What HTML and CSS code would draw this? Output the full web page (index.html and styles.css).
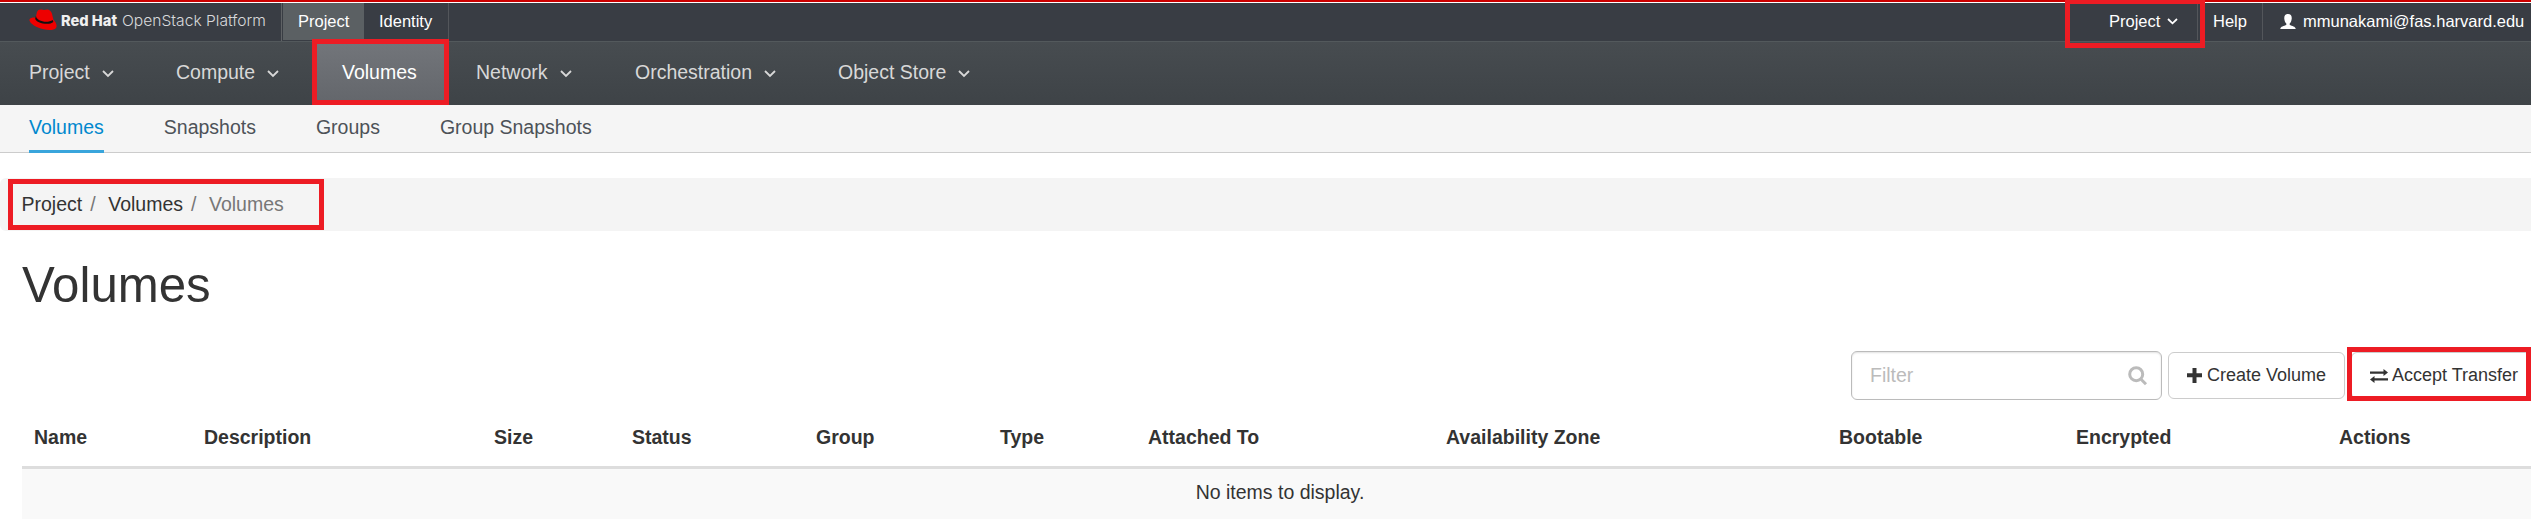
FILE: index.html
```html
<!DOCTYPE html>
<html lang="en">
<head>
<meta charset="utf-8">
<title>Volumes</title>
<link rel="stylesheet" href="styles.css">
</head>
<body>
<header class="topbar">
  <div class="brand">
    <svg width="240" height="30" viewBox="0 0 240 30">
      <path d="M7 13 L9 4 C10 1.500 12 1 15 1.800 C17 2.600 18 1 20 1.600 C23 2.500 24 5 24.500 8 L25.500 12 C28 14 29.500 18 28 20 C25 23.500 16 22 10 19.500 C4 17 .8 13.500 1.600 11.300 C2.300 9.500 5 9.300 8 9.500 Z" fill="#e00"/>
      <path d="M8 8 C8.300 13 19 15.800 24.800 12 L25.300 14 C21 18 7 14.800 7.200 10.500 Z" fill="#111"/>
      <text x="33" y="18" class="brand-bold" textLength="56" lengthAdjust="spacingAndGlyphs">Red Hat</text>
      <text x="94" y="18" class="brand-light" textLength="144" lengthAdjust="spacingAndGlyphs">OpenStack Platform</text>
    </svg>
  </div>
  <a class="tab tab-active">Project</a>
  <a class="tab tab-last">Identity</a>
  <div class="tools">
    <a class="tool tool-project">Project
      <svg width="11" height="7" viewBox="0 0 11 7"><path d="M1 1 L5.500 5.300 L10 1" class="chev"/></svg>
    </a>
    <a class="tool tool-help">Help</a>
    <a class="tool tool-user">
      <svg width="16" height="16" viewBox="0 0 16 16"><path d="M8 0 C10.800 0 12 2 11.700 4.700 C11.500 7 10.700 8.500 9.700 9.500 V11 C12 12 15.500 12.400 15.700 15 H.3 C.5 12.400 4 12 6.300 11 V9.500 C5.300 8.500 4.500 7 4.300 4.700 C4 2 5.200 0 8 0Z" fill="#fff"/></svg>
      mmunakami@fas.harvard.edu
    </a>
  </div>
  <div class="mark mark-project"></div>
</header>
<nav class="mainnav">
  <a>Project<svg width="12" height="8" viewBox="0 0 12 8"><path d="M1 1 L6 6 L11 1" class="chev"/></svg></a>
  <a>Compute<svg width="12" height="8" viewBox="0 0 12 8"><path d="M1 1 L6 6 L11 1" class="chev"/></svg></a>
  <a class="current">Volumes</a>
  <a>Network<svg width="12" height="8" viewBox="0 0 12 8"><path d="M1 1 L6 6 L11 1" class="chev"/></svg></a>
  <a>Orchestration<svg width="12" height="8" viewBox="0 0 12 8"><path d="M1 1 L6 6 L11 1" class="chev"/></svg></a>
  <a>Object Store<svg width="12" height="8" viewBox="0 0 12 8"><path d="M1 1 L6 6 L11 1" class="chev"/></svg></a>
</nav>
<nav class="subnav">
  <a class="selected">Volumes</a>
  <a>Snapshots</a>
  <a>Groups</a>
  <a>Group Snapshots</a>
</nav>
<div class="crumbs">
  <div class="crumb-box"><span>Project</span><i>/</i><span>Volumes</span><i>/</i><em>Volumes</em></div>
</div>
<main>
  <h1>Volumes</h1>
  <div class="actions">
    <div class="filter"><span>Filter</span>
      <svg width="20" height="20" viewBox="0 0 20 20"><circle cx="8.200" cy="8.200" r="6.500"/><path d="M12.800 13 L18 18.200"/></svg>
    </div>
    <a class="btn btn-create"><svg width="15" height="15" viewBox="0 0 15 15"><path d="M5.500 0 H9.500 V5.300 H15 V9.300 H9.500 V15 H5.500 V9.300 H0 V5.300 H5.500Z"/></svg>Create Volume</a>
    <div class="accept-wrap">
      <a class="btn btn-accept"><svg width="18" height="14" viewBox="0 0 18 14"><path d="M0 2.500 H13.500 V0 L18 3.600 L13.500 7 V4.700 H0Z M18 9.300 H4.500 V7 L0 10.400 L4.500 14 V11.500 H18Z"/></svg>Accept Transfer</a>
      <div class="mark mark-accept"></div>
    </div>
  </div>
  <table>
    <colgroup><col class="c1"><col class="c2"><col class="c3"><col class="c4"><col class="c5"><col class="c6"><col class="c7"><col class="c8"><col class="c9"><col class="c10"><col class="c11"></colgroup>
    <thead><tr><th>Name</th><th>Description</th><th>Size</th><th>Status</th><th>Group</th><th>Type</th><th>Attached To</th><th>Availability Zone</th><th>Bootable</th><th>Encrypted</th><th>Actions</th></tr></thead>
    <tbody><tr><td colspan="11">No items to display.</td></tr></tbody>
  </table>
</main>
</body>
</html>
```

FILE: styles.css
```css
* { box-sizing: border-box; }
body {
  margin: 0;
  height: 532px;
  overflow: hidden;
  background: #fff;
  color: #333;
  font: 19.5px "Liberation Sans", Arial, sans-serif;
}
svg { display: block; flex: none; }
.chev { fill: none; stroke: currentColor; stroke-width: 1.8; }

.topbar {
  position: relative;
  display: flex;
  height: 42px;
  border-top: 2px solid #c00;
  border-bottom: 1px solid #53595c;
  background: linear-gradient(#fff 1px, #393d44 1px);
  color: #fff;
  font-size: 16.5px;
  line-height: 37px;
}
.brand { width: 282px; height: 38px; margin: 1px 1px 0 0; padding: 5px 0 0 28px; border-right: 1px solid #5f6265; }
.brand-bold { font: 800 15px Inter, sans-serif; fill: #f0f0f0; }
.brand-light { font: 300 15px Inter, sans-serif; fill: #d8d9db; }
.tab { height: 37px; margin-top: 1px; padding-left: 15px; }
.tab-active { width: 81px; background: #5b6063; }
.tab-last { width: 85px; border-right: 1px solid #53565b; }
.tools { display: flex; margin-left: auto; margin-top: 1px; height: 37px; }
.tool { display: flex; align-items: center; white-space: nowrap; }
.tool-project { width: 89px; gap: 7px; border-right: 1px solid #53565b; }
.tool-help { width: 65px; padding-left: 15px; border-right: 1px solid #53565b; }
.tool-user { width: 268px; padding-left: 17px; gap: 7px; }
.mark { position: absolute; border: 5px solid #ed1c24; }
.mark-project { left: 2065px; top: -3px; width: 140px; height: 49px; z-index: 1; }

.mainnav {
  display: grid;
  grid-template-columns: 147px 140px 160px 159px 203px 300px;
  padding-left: 29px;
  height: 63px;
  background: linear-gradient(#474c50, #3e4347);
  color: #d8d8d8;
}
.mainnav a { display: flex; align-items: center; gap: 12px; padding-bottom: 2px; }
.mainnav svg { margin-top: 3px; }
.mainnav .current {
  width: 137px;
  height: 66px;
  margin: -3px 0 0 -4px;
  padding: 1px 0 0 25px;
  border: 5px solid #ed1c24;
  background: linear-gradient(#72757a, #64676c);
  color: #fff;
  z-index: 1;
}

.subnav {
  display: flex;
  height: 48px;
  padding-left: 29px;
  gap: 60px;
  border-bottom: 1px solid #ccc;
  background: #f5f5f5;
  color: #4d5258;
  line-height: 44px;
}
.subnav a { height: 48px; }
.subnav .selected { border-bottom: 3px solid #39a5dc; color: #0088ce; }

.crumbs { height: 53px; margin-top: 25px; padding: 1px 0 0 8px; border-radius: 6px 0 0 6px; background: #f4f4f4; }
.crumb-box { display: flex; width: 316px; height: 51px; border: 5px solid #ed1c24; padding-left: 8.500px; line-height: 41px; }
.crumb-box i { width: 26px; padding-left: 8px; font-style: normal; color: #777; }
.crumb-box em { font-style: normal; color: #777; }

main { padding-left: 22px; }
h1 { margin: 27px 0 0; height: 54px; font-size: 49.200px; font-weight: 400; line-height: 54px; }
.actions { display: flex; align-items: flex-start; margin: 35px 0 0 1829px; height: 54px; }
.filter {
  display: flex;
  justify-content: space-between;
  align-items: center;
  width: 311px;
  height: 49px;
  margin-top: 4px;
  padding: 0 13px 0 18px;
  border: 1px solid #bbb;
  border-radius: 6px;
  box-shadow: inset 0 1px 2px rgba(0, 0, 0, .12);
  color: #bbb;
}
.filter svg { fill: none; stroke: #bbb; stroke-width: 3; }
.btn {
  display: flex;
  align-items: center;
  height: 47px;
  border: 1px solid #ccc;
  border-radius: 6px;
  font-size: 18px;
  white-space: nowrap;
}
.btn svg { fill: #333; }
.btn-create { width: 177px; margin: 5px 0 0 6px; padding-left: 18px; gap: 5px; }
.accept-wrap { position: relative; width: 184px; height: 54px; margin-left: 2px; padding: 5px 0 0 4px; }
.btn-accept { width: 180px; padding-left: 18px; gap: 4px; }
.mark-accept { inset: 0; }

table { width: 2516px; margin-top: 9px; border-collapse: collapse; table-layout: fixed; }
th { height: 57px; padding: 0 0 1px 12px; border-bottom: 3px solid #ddd; text-align: left; }
td { height: 52px; padding: 0 0 2px; background: #f9f9f9; text-align: center; }
.c1 { width: 170px; }
.c2 { width: 290px; }
.c3 { width: 138px; }
.c4 { width: 184px; }
.c5 { width: 184px; }
.c6 { width: 148px; }
.c7 { width: 298px; }
.c8 { width: 393px; }
.c9 { width: 237px; }
.c10 { width: 263px; }
```
